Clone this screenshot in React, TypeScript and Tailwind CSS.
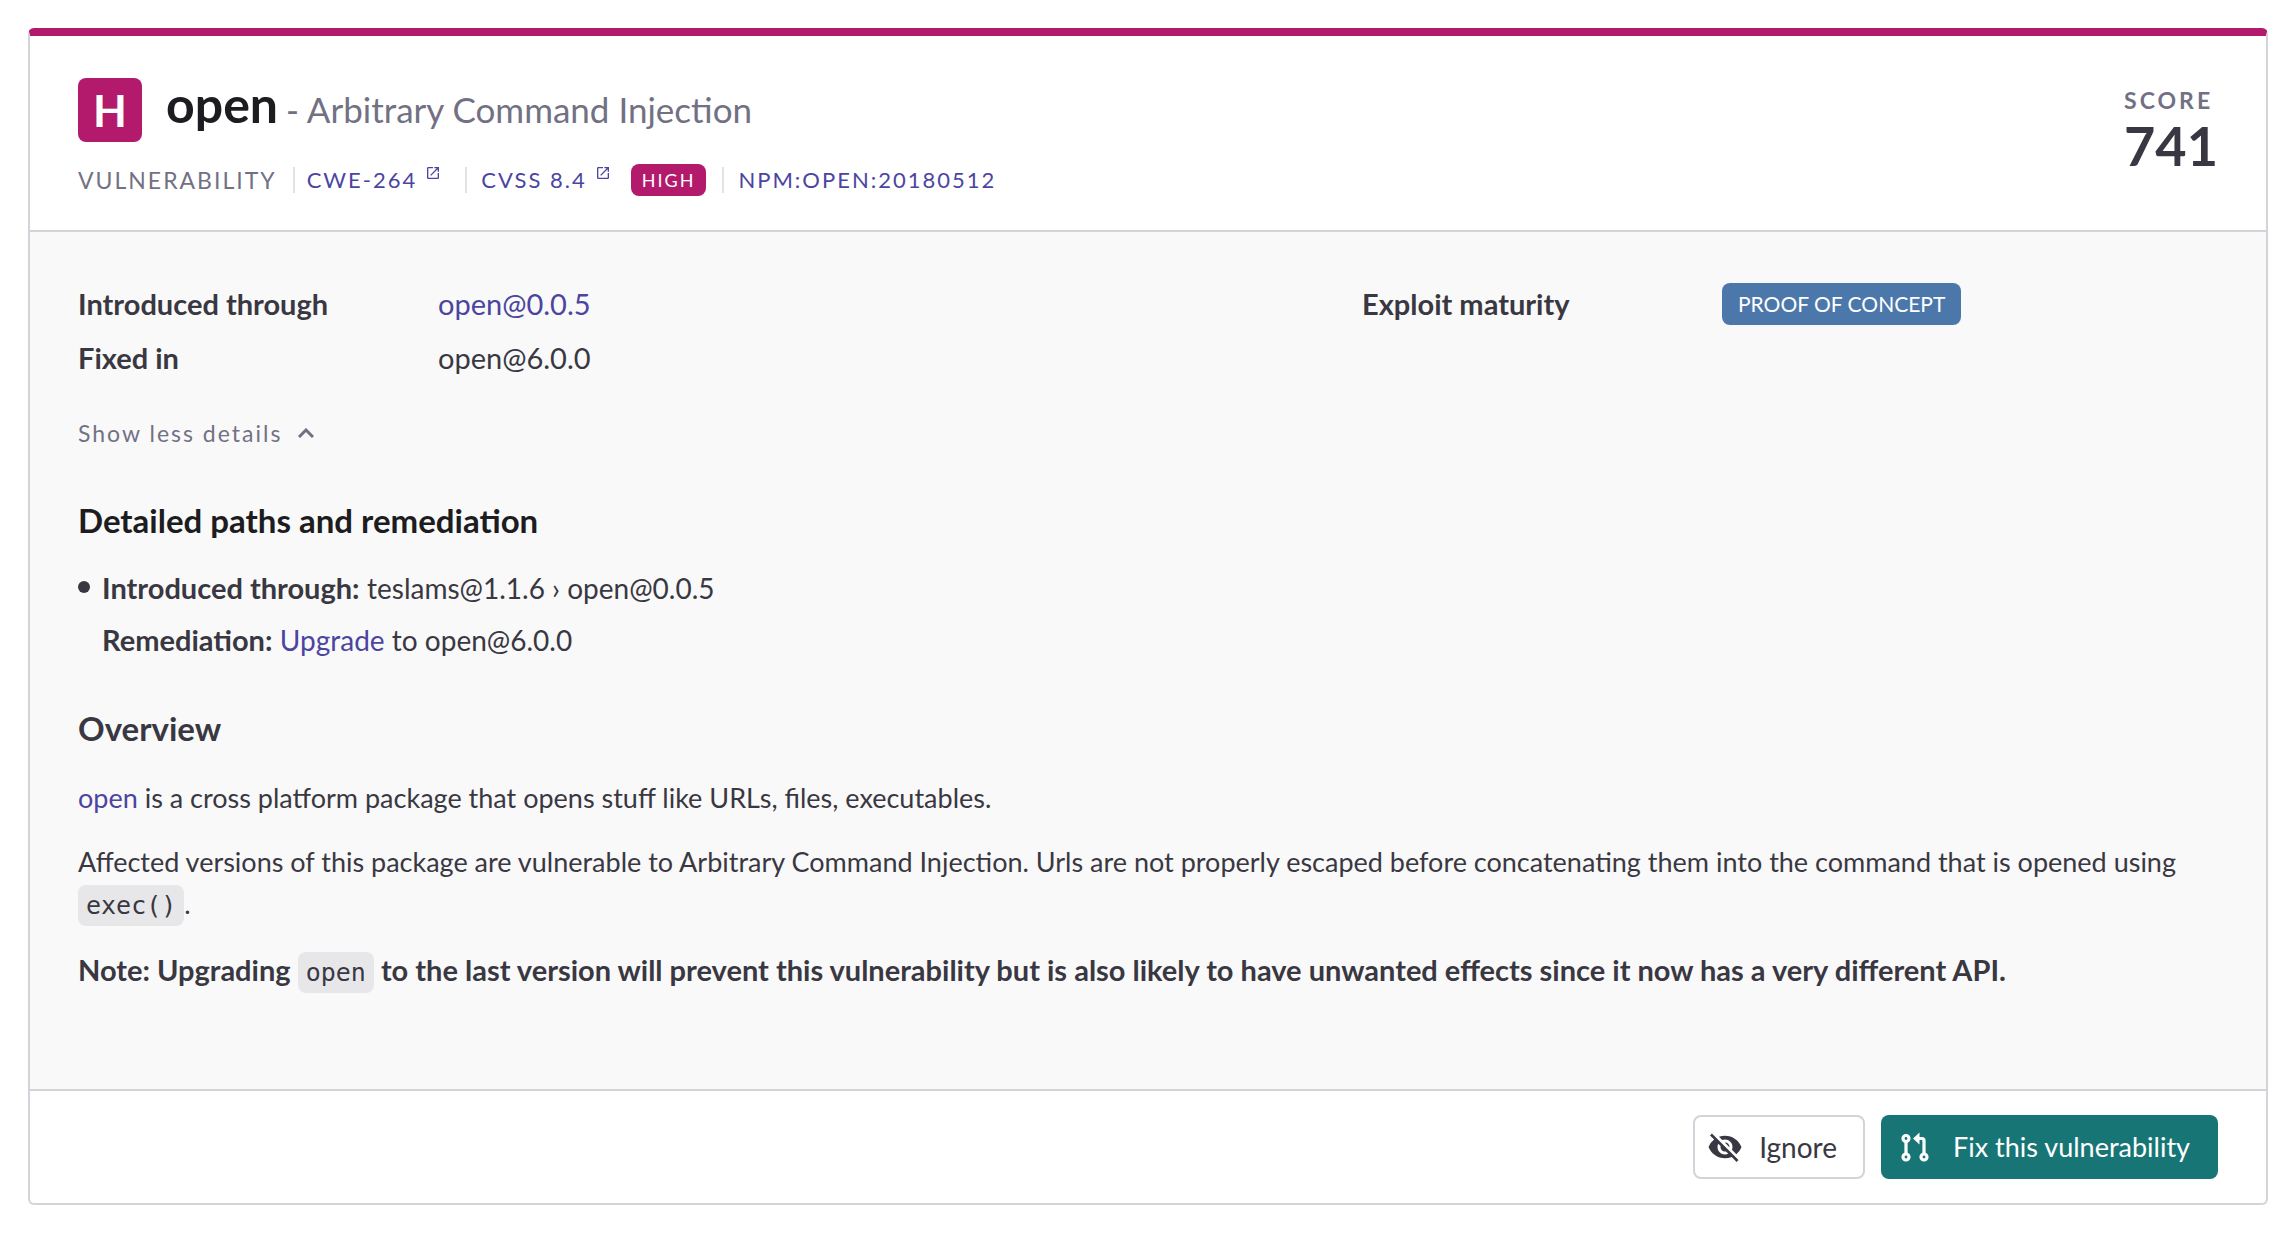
import type { ReactNode } from "react";
import { MdOpenInNew, MdVisibilityOff } from "react-icons/md";

function ExternalLink({ children }: { children: ReactNode }) {
  return (
    <a href="#" className="flex items-start gap-2 text-[22px] text-[#4b45a1]">
      {children}
      <MdOpenInNew className="mt-px size-4" aria-hidden="true" />
    </a>
  );
}

function Divider() {
  return <span className="h-[26px] w-0.5 bg-[#e1e1e6]" />;
}

function PullRequestIcon() {
  return (
    <svg viewBox="0 0 28 28" className="size-7 overflow-visible" fill="none" stroke="currentColor" strokeWidth="3.2" aria-hidden="true">
      <circle cx="5" cy="5.5" r="3" />
      <circle cx="5" cy="24" r="3" />
      <circle cx="23" cy="24" r="3" />
      <path d="M5 8.5v12.5M23 21V7.5a2 2 0 0 0-2-2h-4" />
      <path d="M18.5 -.5v12l-6.5-6z" fill="currentColor" stroke="none" />
    </svg>
  );
}

function Code({ children }: { children: ReactNode }) {
  return (
    <code className="rounded-lg bg-[#e7e7ea] px-2 py-1.5 font-['DejaVu_Sans_Mono',monospace] text-[25px] leading-7 font-normal">
      {children}
    </code>
  );
}

export default function App() {
  return (
    <div className="bg-white p-7 font-[Lato,sans-serif] text-[29px] leading-[42px] text-[#393842]">
      <article className="overflow-hidden rounded-md border-2 border-t-8 border-[#d3d3d9] border-t-[#b31a6b] bg-white">
        <header className="flex items-start justify-between border-b-2 border-[#d3d3d9] px-12 pt-[42px] pb-[34px]">
          <div>
            <h2 className="flex items-center gap-6">
              <span className="flex size-16 items-center justify-center rounded-lg bg-[#b31a6b] text-[44px] font-bold text-white">
                H
              </span>
              <span className="flex items-baseline gap-2 pb-2 text-[35px] text-[#727184]">
                <strong className="text-[50px] text-[#1c1c21]">open</strong>
                <span>- Arbitrary Command Injection</span>
              </span>
            </h2>
            <div className="mt-[22px] flex items-center text-[23px] leading-8 tracking-[2px] text-[#727184]">
              <span className="mr-4">VULNERABILITY</span>
              <Divider />
              <span className="mr-6 ml-3"><ExternalLink>CWE-264</ExternalLink></span>
              <Divider />
              <span className="mr-5 ml-3.5"><ExternalLink>CVSS 8.4</ExternalLink></span>
              <span className="mr-4 rounded-lg bg-[#b31a6b] px-[11px] text-lg leading-8 text-white">HIGH</span>
              <Divider />
              <a href="#" className="ml-3.5 text-[22px] text-[#4b45a1]">NPM:OPEN:20180512</a>
            </div>
          </div>
          <div className="mt-1.5 text-[#393842]">
            <div className="text-[23px] leading-8 font-bold tracking-[3px] text-[#727184]">SCORE</div>
            <div className="text-[54px] leading-[60px] font-bold">741</div>
          </div>
        </header>

        <section className="border-b-2 border-[#d3d3d9] bg-[#f9f9f9] px-12 pt-[51px] pb-[98px]">
          <div className="grid grid-cols-[1284fr_856fr]">
            <dl className="grid grid-cols-[360px_1fr] gap-y-3">
              <dt className="font-bold">Introduced through</dt>
              <dd><a href="#" className="text-[#4b45a1]">open@0.0.5</a></dd>
              <dt className="font-bold">Fixed in</dt>
              <dd>open@6.0.0</dd>
            </dl>
            <dl className="grid grid-cols-[360px_1fr] content-start">
              <dt className="font-bold">Exploit maturity</dt>
              <dd className="flex">
                <span className="rounded-lg bg-[#4b77ab] px-4 text-[21px] text-white">PROOF OF CONCEPT</span>
              </dd>
            </dl>
          </div>

          <button type="button" className="mt-[34px] flex items-center gap-4 text-[23px] leading-10 tracking-[2px] text-[#727184]">
            Show less details
            <svg viewBox="0 0 16 10" className="h-2.5 w-4" fill="none" stroke="currentColor" strokeWidth="3" aria-hidden="true">
              <path d="M1 9l7-7 7 7" />
            </svg>
          </button>

          <h3 className="mt-[46px] text-[33px] font-bold text-[#1c1c21]">Detailed paths and remediation</h3>
          <ul className="mt-[26px]">
            <li className="flex gap-3">
              <span className="mt-3.5 size-3 rounded-md bg-[#393842]" />
              <div className="flex flex-col gap-2.5">
                <div><strong>Introduced through:</strong> <span className="text-[28px]">teslams@1.1.6 › open@0.0.5</span></div>
                <div><strong>Remediation:</strong> <span className="text-[28px]"><a href="#" className="text-[#4b45a1]">Upgrade</a> to open@6.0.0</span></div>
              </div>
            </li>
          </ul>

          <h3 className="mt-[46px] text-[33px] font-bold">Overview</h3>
          <p className="mt-7 text-[27px]">
            <a href="#" className="text-[#4b45a1]">open</a> is a cross platform package that opens stuff like URLs, files, executables.
          </p>
          <p className="mt-[22px] text-[27px]">
            Affected versions of this package are vulnerable to Arbitrary Command Injection. Urls are not properly escaped
            before concatenating them into the command that is opened using <Code>exec()</Code>.
          </p>
          <p className="mt-6 font-bold">
            Note: Upgrading <Code>open</Code> to the last version will prevent this vulnerability but is also likely to have
            unwanted effects since it now has a very different API.
          </p>
        </section>

        <footer className="flex justify-end gap-4 px-12 py-6">
          <button type="button" className="flex h-16 items-center gap-4 rounded-lg border-2 border-[#d3d3d9] bg-white pr-[26px] pl-3 text-[28px]">
            <MdVisibilityOff className="size-9" aria-hidden="true" />
            Ignore
          </button>
          <button type="button" className="flex h-16 items-center gap-6 rounded-lg bg-[#177675] pr-7 pl-5 text-[27px] text-white">
            <PullRequestIcon />
            Fix this vulnerability
          </button>
        </footer>
      </article>
    </div>
  );
}
